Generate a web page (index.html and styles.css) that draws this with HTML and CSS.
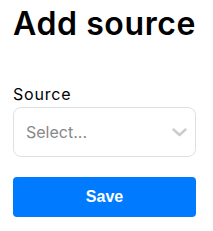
FILE: index.html
```html
<!DOCTYPE html>
<html lang="en">
<head>
    <meta charset="UTF-8">
    <title>Add source</title>
    <link rel="stylesheet" href="styles.css">
</head>
<body>
    <div class="form-container">
        <h1 class="form-title">Add source</h1>
        <label class="field-label" for="source">Source</label>
        <div class="select-box" id="source">
            <span class="select-placeholder">Select...</span>
            <svg class="select-arrow" width="15" height="9" viewBox="0 0 15 9">
                <path d="M1.5 1.5 L7.5 7 L13.5 1.5" fill="none" stroke="#cccccc" stroke-width="2.4" stroke-linecap="round" stroke-linejoin="round"/>
            </svg>
        </div>
        <button class="save-button" type="button">Save</button>
    </div>
</body>
</html>
```

FILE: styles.css
```css
body {
    margin: 0;
    background: #fff;
    color: #000;
    font-family: Inter, "Open Sans", sans-serif;
}
.form-container {
    padding: 0 17px 0 13px;
}
.form-title {
    font-size: 32px;
    font-weight: 600;
    line-height: 36px;
    letter-spacing: 0.6px;
    margin: 6px 0 0 0;
}
.field-label {
    display: block;
    font-size: 16px;
    line-height: 20px;
    letter-spacing: 0.8px;
    margin-top: 42px;
}
.select-box {
    display: flex;
    align-items: center;
    justify-content: space-between;
    height: 48px;
    margin-top: 3px;
    padding: 0 8px 0 12px;
    border: 1px solid #e0e0e0;
    border-radius: 8px;
}
.select-placeholder {
    font-size: 16px;
    color: #888;
}
.save-button {
    display: block;
    width: 100%;
    height: 40px;
    margin-top: 20px;
    background: #007bff;
    color: #fff;
    border: none;
    border-radius: 4px;
    font-family: "Liberation Sans", Arial, sans-serif;
    font-weight: bold;
    font-size: 16px;
}
```
